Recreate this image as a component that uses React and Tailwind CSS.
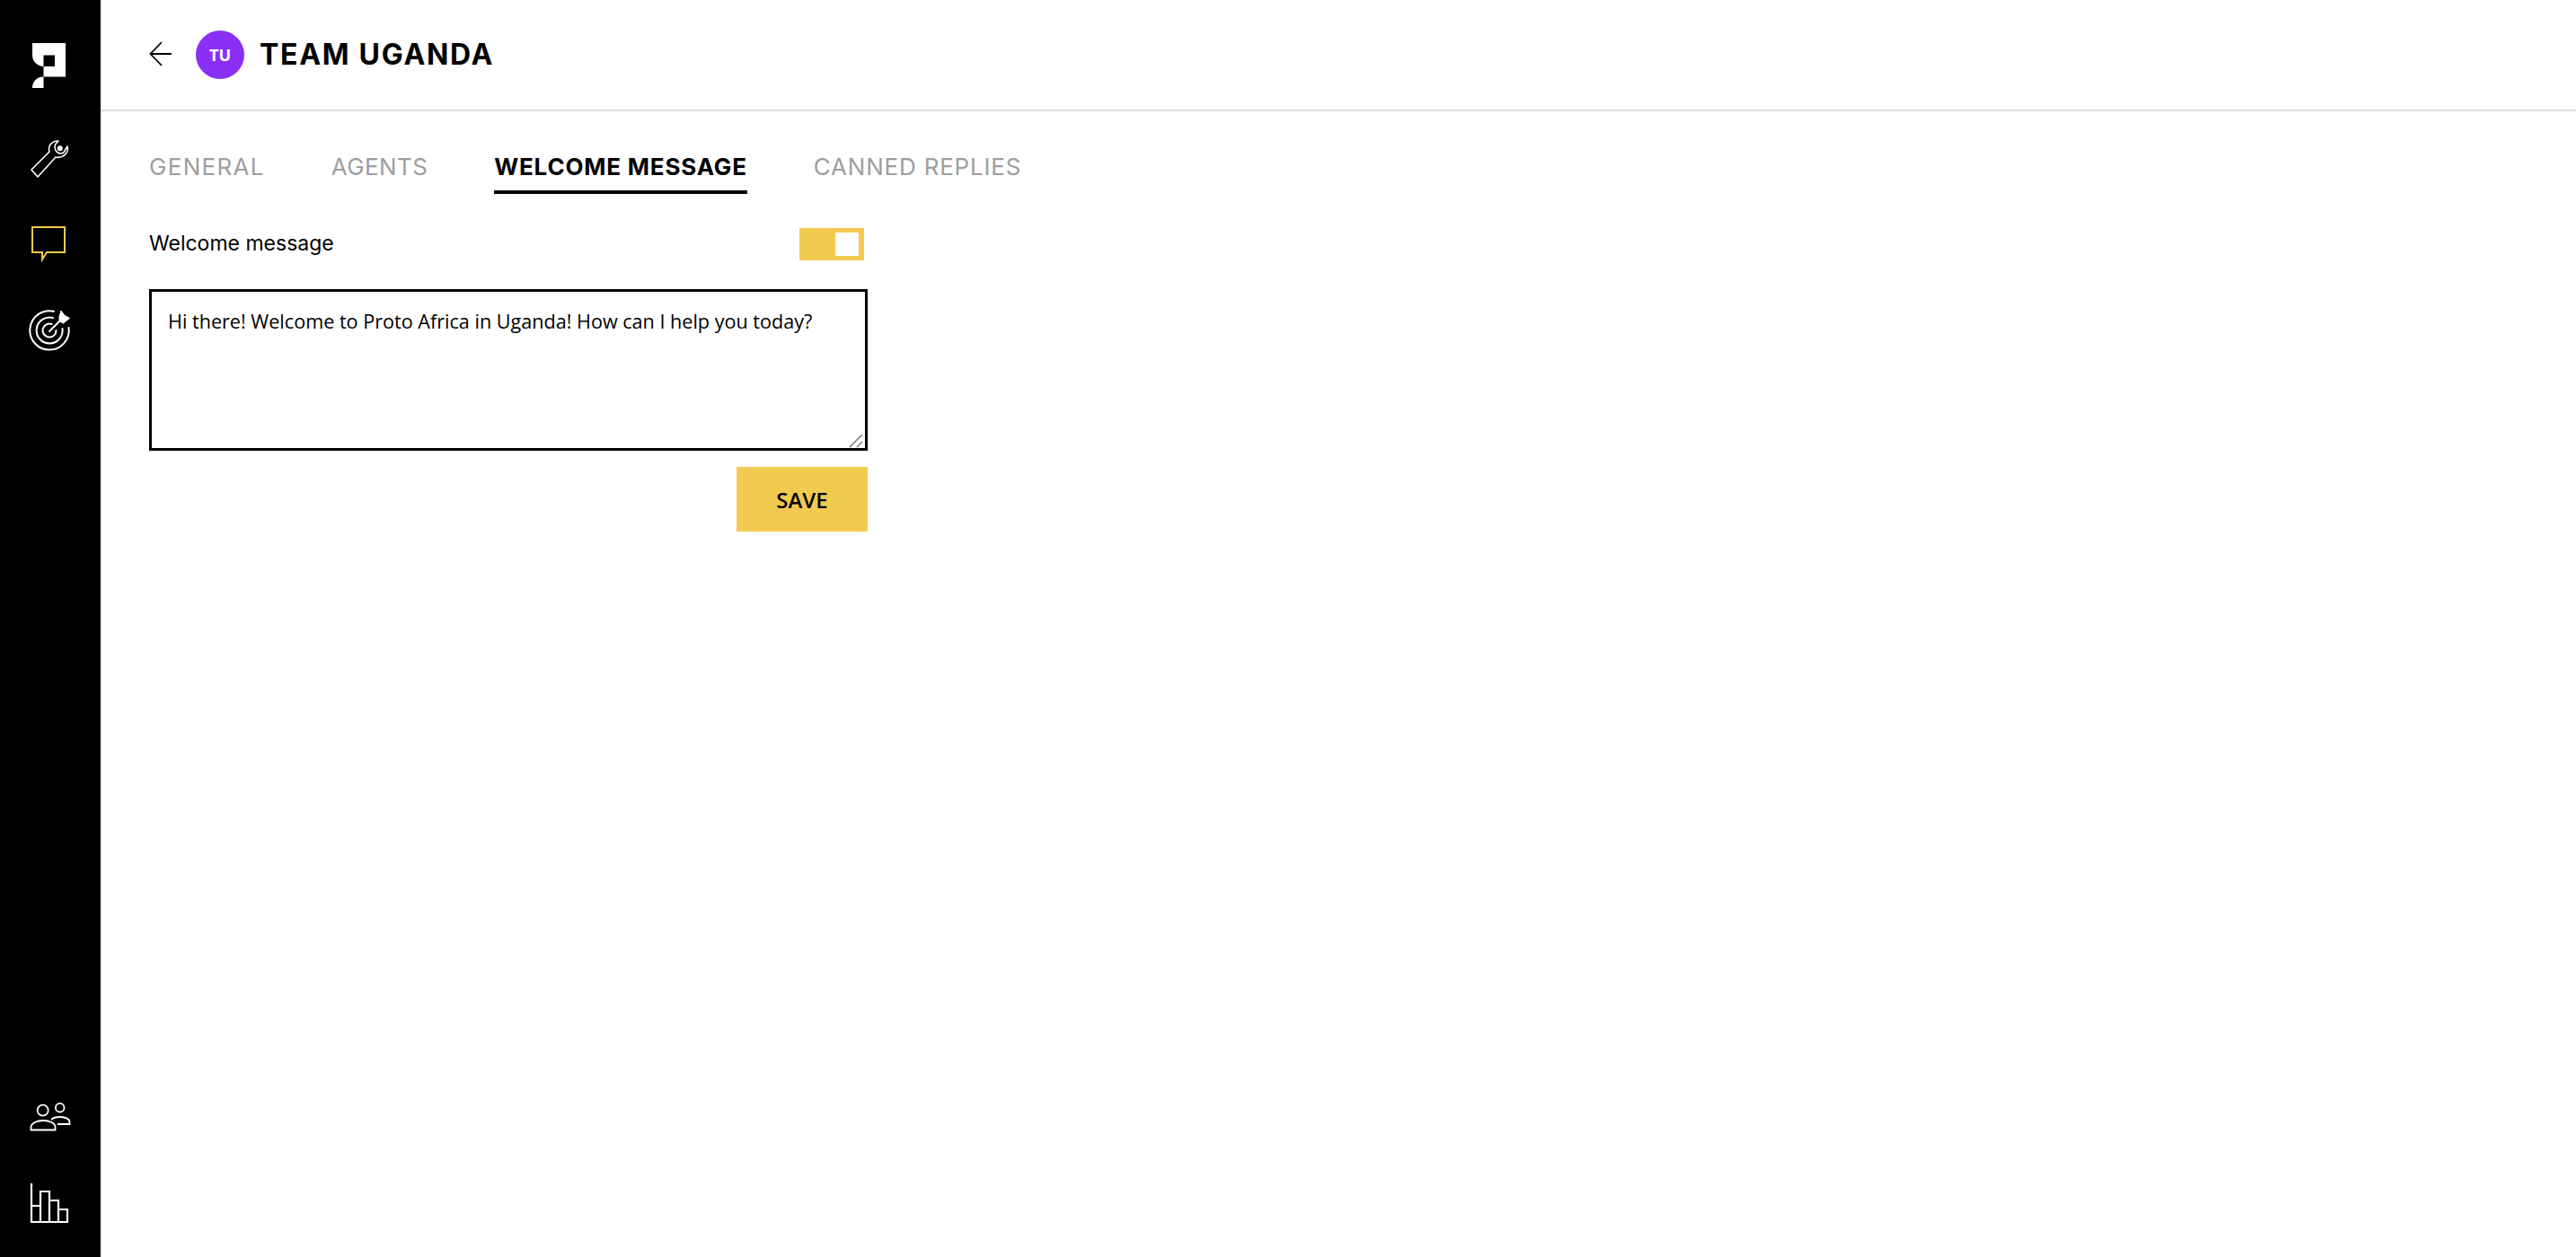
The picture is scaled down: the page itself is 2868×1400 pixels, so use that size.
import React from "react";

const heading = "font-['Inter',sans-serif]";

function Logo() {
  return (
    <svg width="48" height="60" viewBox="32 43 48 60" fill="#fff">
      <path fillRule="evenodd" d="M36 48H73V85.5H48.5V74A12.5 12.5 0 0 1 36 61.5ZM48.5 61.5V74H61V61.5Z" />
      <path d="M36 98V97A12 12 0 0 1 48.5 85.5V98Z" />
    </svg>
  );
}

function Wrench() {
  return (
    <svg width="48" height="48" viewBox="0 0 48 48" fill="none" stroke="#fff" strokeWidth="1.6" strokeLinejoin="round">
      <path d="M3 37L23 17C21 11 25 5 33 5L29.500 9C28 13 30 18 35 19C38 19 40 17 40.500 15L43 11C45 18 38 25 30 23L10 45Z" />
      <circle cx="34.800" cy="13.200" r="3" fill="#fff" stroke="none" />
    </svg>
  );
}

function Chat() {
  return (
    <svg width="48" height="48" viewBox="0 0 48 48" fill="none" stroke="#f2ca50" strokeWidth="2">
      <path d="M4 5H40V33H20L15 41V33H4Z" />
    </svg>
  );
}

function Target() {
  return (
    <svg width="48" height="48" viewBox="0 0 48 48" fill="none" stroke="#fff" strokeWidth="2" strokeLinecap="round">
      <path d="M28 2.800A21.700 21.700 0 1 0 44.500 21" />
      <path d="M27 10A14.500 14.500 0 1 0 37.500 22" />
      <path d="M25.500 17A7.500 7.500 0 1 0 30.500 24" />
      <path d="M23 25L36 12" />
      <path d="M34 9L36 2L39.500 7L45.500 10.500L38.500 16L34.500 14Z" fill="#fff" stroke="#fff" strokeWidth="1" strokeLinejoin="round" />
    </svg>
  );
}

function Users() {
  return (
    <svg width="48" height="48" viewBox="0 0 48 48" fill="none" stroke="#fff" strokeWidth="1.8">
      <circle cx="15.700" cy="16.700" r="6" />
      <circle cx="34.700" cy="13.700" r="4.800" />
      <path d="M2.500 38.500V35C3 31 9 28 16 28C23 28 29.500 31 29.500 35V38.500Z" />
      <path d="M25 27C27 25 31 24 35 24C41 24 45.500 26.500 45.500 29.500V32H32" />
    </svg>
  );
}

function Bars() {
  return (
    <svg width="48" height="48" viewBox="0 0 48 48" fill="none" stroke="#fff" strokeWidth="2.200">
      <path d="M3 2V45H43V31H33V21H23V11H13V45M13 27H3M23 21V45M33 31V45" />
    </svg>
  );
}

function NavIcon({ children }) {
  return <div className="h-[96px] flex items-center justify-center">{children}</div>;
}

function Sidebar() {
  return (
    <aside className="w-[112px] shrink-0 bg-black flex flex-col">
      <div className="pt-[25px] pb-[7px]">
        <NavIcon><Logo /></NavIcon>
      </div>
      <NavIcon><Wrench /></NavIcon>
      <NavIcon><Chat /></NavIcon>
      <NavIcon><Target /></NavIcon>
      <div className="mt-auto pb-[12px]">
        <NavIcon><Users /></NavIcon>
        <NavIcon><Bars /></NavIcon>
      </div>
    </aside>
  );
}

function Tab({ label, className }) {
  return (
    <button className={`${heading} h-[50px] whitespace-nowrap text-[26px] leading-none border-b-4 pb-[6px] ${className}`}>
      {label}
    </button>
  );
}

export default function App() {
  const idle = "font-normal text-[#9e9e9e] border-transparent";
  return (
    <div className="flex min-h-[1400px] bg-white text-black font-['Open_Sans',sans-serif]">
      <Sidebar />
      <main className="flex-1">
        <header className="h-[124px] border-b-2 border-[#e0e0e0] flex items-center pl-[54px]">
          <svg className="mb-[3px]" width="28" height="28" viewBox="0 0 28 28" fill="none" stroke="#000" strokeWidth="1.8">
            <path d="M25 14H2M14 1L1.500 14L14 27" />
          </svg>
          <div className="ml-[24px] w-[54px] h-[54px] rounded-full bg-[#8a2ff5] text-white flex items-center justify-center text-[18px] font-bold">
            TU
          </div>
          <h1 className={`${heading} ml-[17px] text-[32px] font-bold tracking-[1.7px]`}>TEAM UGANDA</h1>
        </header>
        <div className="pl-[54px] pt-[42px]">
          <nav className="flex gap-[74px]">
            <Tab label="GENERAL" className={`${idle} tracking-[1.3px]`} />
            <Tab label="AGENTS" className={`${idle} tracking-[0.4px]`} />
            <Tab label="WELCOME MESSAGE" className="font-bold text-black border-black tracking-[0.8px]" />
            <Tab label="CANNED REPLIES" className={`${idle} tracking-[0.8px]`} />
          </nav>
          <div className="w-[800px] mt-[38px]">
            <div className="flex items-center justify-between pr-[4px] h-[36px]">
              <span className={`${heading} text-[23px] leading-[32px] mb-[2px]`}>Welcome message</span>
              <div className="w-[72px] h-[36px] bg-[#f2ca50] flex items-center justify-end pr-[6px]">
                <div className="w-[26px] h-[26px] bg-white" />
              </div>
            </div>
            <div className="relative mt-[32px]">
              <textarea
                className="block w-full h-[180px] border-[3px] border-black pt-[19px] px-[18px] pb-[18px] text-[21.6px] leading-[28px] outline-none resize-none"
                defaultValue="Hi there! Welcome to Proto Africa in Uganda! How can I help you today?"
              />
              <svg className="absolute right-[5px] bottom-[3px] pointer-events-none" width="16" height="16" viewBox="0 0 16 16" stroke="#757575" strokeWidth="1.5">
                <path d="M1 15L15 1M9 15L15 9" />
              </svg>
            </div>
            <div className="flex justify-end mt-[18px]">
              <button className="w-[146px] h-[72px] pt-[2px] bg-[#f2ca50] text-[24px] font-semibold">SAVE</button>
            </div>
          </div>
        </div>
      </main>
    </div>
  );
}
